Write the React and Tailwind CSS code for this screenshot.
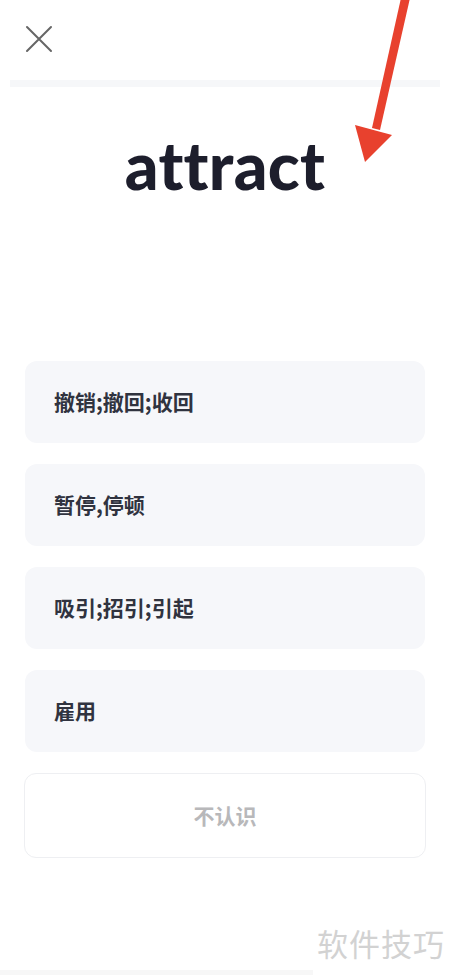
const options = ["撤销;撤回;收回", "暂停,停顿", "吸引;招引;引起", "雇用"];

const App = () => {
  return (
    <div
      className="relative w-[450px] h-[975px] overflow-hidden bg-white"
      style={{ fontFamily: '"Noto Sans CJK SC", "Noto Sans", sans-serif' }}
    >
      <div className="h-[80px] pl-[25px] flex items-center">
        <svg width="28" height="28" viewBox="0 0 28 28" className="mt-[-2px]">
          <path d="M2 2 L26 26 M26 2 L2 26" stroke="#666" strokeWidth="2" strokeLinecap="round" />
        </svg>
      </div>
      <div className="mx-[10px] h-[7px] bg-[#f6f7f9]" />

      <div className="pt-[38px] h-[274px] flex justify-center">
        <h1
          className="text-[66px] leading-[80px] font-black text-[#1d1e2c] tracking-[0.3px]"
          style={{ fontFamily: "Lato, sans-serif" }}
        >
          attract
        </h1>
      </div>

      <div className="px-[25px] flex flex-col gap-[21px]">
        {options.map((o) => (
          <div
            key={o}
            className="h-[82px] rounded-[12px] bg-[#f6f7fa] flex items-center pl-[29px] text-[21px] font-bold text-[#30333f]"
          >
            {o}
          </div>
        ))}
        <div className="mx-[-1px] h-[85px] rounded-[12px] border border-[#eeeff2] flex items-center justify-center text-[21px] font-bold text-[#b8b8ba]">
          不认识
        </div>
      </div>

      <div className="absolute right-[5px] top-[920px] text-[31px] text-[#d2d2d2] tracking-[1px]">
        软件技巧
      </div>
      <div className="absolute left-0 bottom-0 w-[313px] h-[5px] bg-[#f7f7f7]" />

      <svg className="absolute left-0 top-0" width="450" height="200" viewBox="0 0 450 200">
        <path d="M410 -2 L401 -2 L372 128 L380 130 Z" fill="#e8412e" />
        <path d="M355 125 L392 135 L365 162 Z" fill="#e8412e" />
      </svg>
    </div>
  );
};

export default App;
